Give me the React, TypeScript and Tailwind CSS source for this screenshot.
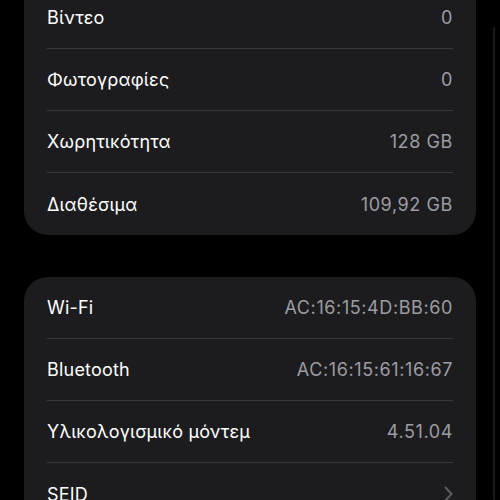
import React from 'react';

type Row = { label: string; value?: string; chevron?: boolean };

const mediaRows: Row[] = [
    { label: 'Βίντεο', value: '0' },
    { label: 'Φωτογραφίες', value: '0' },
    { label: 'Χωρητικότητα', value: '128 GB' },
    { label: 'Διαθέσιμα', value: '109,92 GB' },
];

const networkRows: Row[] = [
    { label: 'Wi-Fi', value: 'AC:16:15:4D:BB:60' },
    { label: 'Bluetooth', value: 'AC:16:15:61:16:67' },
    { label: 'Υλικολογισμικό μόντεμ', value: '4.51.04' },
    { label: 'SEID', chevron: true },
];

const Chevron = () => (
    <svg width="9" height="16" viewBox="0 0 9 16" fill="none" className="text-[#5c5c60]">
        <path d="M1.5 1.5L7.5 8L1.5 14.5" stroke="currentColor" strokeWidth="2" strokeLinecap="round" strokeLinejoin="round" />
    </svg>
);

const Group: React.FC<{ rows: Row[]; className?: string }> = ({ rows, className }) => (
    <div className={`bg-[#1c1c1e] rounded-[24px] mx-[24px] px-[23px] ${className ?? ''}`}>
        {rows.map((row, i) => (
            <div key={row.label} className={`flex items-center justify-between h-[62px] ${i < rows.length - 1 ? 'border-b border-[#38383a]' : ''}`}>
                <span className="text-white text-[18px] tracking-[0.2px]">{row.label}</span>
                {row.chevron ? <Chevron /> : <span className="text-[#9c9ca2] text-[18px] tracking-[0.6px]">{row.value}</span>}
            </div>
        ))}
    </div>
);

export default function App() {
    return (
        <div className="relative w-[500px] h-[500px] overflow-hidden bg-black font-['Inter','Noto_Sans',sans-serif]">
            <Group rows={mediaRows} className="-mt-[13px] rounded-t-none" />
            <Group rows={networkRows} className="mt-[42px]" />
            <div className="absolute left-[493px] top-[27px] bottom-0 w-[2px] rounded-full bg-[#1a1a1a]" />
        </div>
    );
}
